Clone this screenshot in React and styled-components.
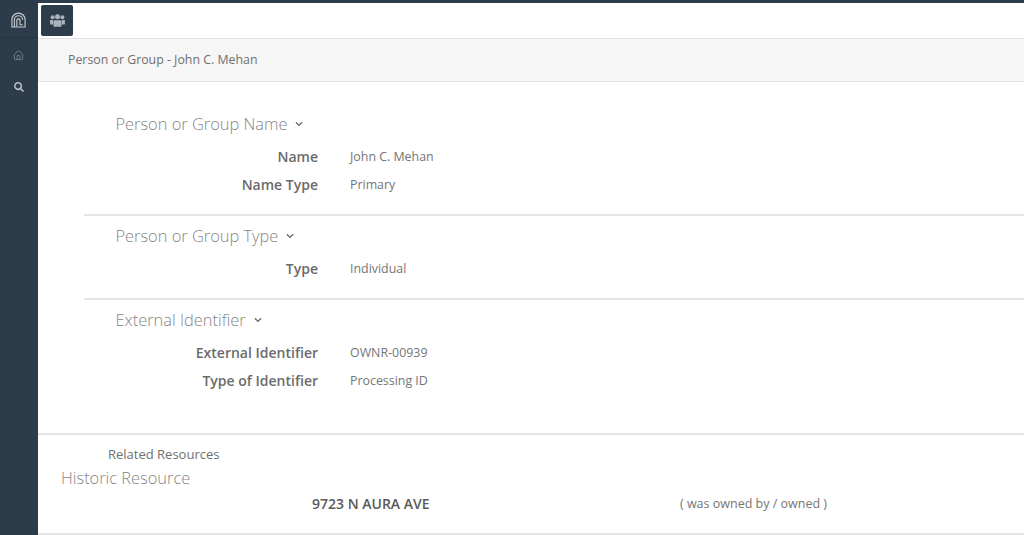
import React from "react";
import styled, { createGlobalStyle } from "styled-components";
import { FaSearch, FaChevronDown } from "react-icons/fa";
import { LuHouse } from "react-icons/lu";

const Global = createGlobalStyle`
  html, body { margin: 0; padding: 0; background: #fff; overflow: hidden; }
  body { font-family: "Open Sans", "Liberation Sans", sans-serif; color: #666; }
`;
const Page = styled.div`width: 1024px; height: 535px; display: flex; flex-direction: column; overflow: hidden;`;
const TopStrip = styled.div`height: 3px; background: #2d3c4b; flex: none;`;
const Body = styled.div`display: flex; flex: 1; min-height: 0;`;
const Side = styled.nav`width: 38px; flex: none; background: #2d3c4b; display: flex; flex-direction: column; align-items: center;`;
const Logo = styled.div`height: 35px; width: 100%; display: flex; align-items: center; justify-content: center; padding: 0 1px 1px 0; border-bottom: 1px solid #28353f; box-sizing: border-box; color: #c8ccd0;`;
const SideIcon = styled.div`height: 32px; width: 100%; display: flex; align-items: center; justify-content: center; padding-right: 1px; box-sizing: border-box; color: ${p => p.$c};`;
const SideList = styled.div`padding-top: 1px; width: 100%;`;
const Main = styled.main`flex: 1; display: flex; flex-direction: column; min-width: 0;`;
const Toolbar = styled.div`height: 35px; box-sizing: border-box; padding: 2px 0 0 3px; display: flex; align-items: flex-start; flex: none;`;
const ToolBtn = styled.div`width: 32px; height: 31px; background: #2d3c4b; border-radius: 2px; display: flex; align-items: center; justify-content: center; color: #aab2ba;`;
const Crumb = styled.div`height: 44px; flex: none; box-sizing: border-box; background: #f6f6f6; border-top: 1px solid #e3e3e3; border-bottom: 1px solid #e3e3e3; padding: 0 0 2px 30px; display: flex; align-items: center; font-size: 12.35px; color: #707070;`;
const Section = styled.section`margin-left: 46px; box-sizing: border-box; height: ${p => p.$h}px; padding: ${p => p.$pt}px 0 0 31.5px; border-bottom: ${p => p.$line ? "2px solid #e4e4e4" : "none"}; flex: none;`;
const Heading = styled.h3`margin: 0; font-weight: 300; font-size: 16.4px; line-height: 22px; color: #858585; display: flex; align-items: center; gap: 8px;`;
const Caret = styled(FaChevronDown)`color: #666;`;
const Rows = styled.div`display: grid; grid-template-columns: 234px 1fr; column-gap: 32px; grid-auto-rows: 28px; margin-left: -31.5px; margin-top: ${p => p.$mt}px;`;
const Label = styled.div`text-align: right; font-weight: 600; font-size: 14px; line-height: 28px; color: #6b6b6b;`;
const Value = styled.div`font-size: 12.4px; line-height: 28px; color: #757575;`;
const Related = styled.section`border-top: 2px solid #e4e4e4; border-bottom: 2px solid #e4e4e4; height: 102px; box-sizing: border-box; flex: none; padding-top: 10px;`;
const RelTitle = styled.div`padding-left: 70px; font-size: 13px; line-height: 18px; color: #707070;`;
const RelHead = styled.h3`margin: 4px 0 0 23px; font-weight: 300; font-size: 16.4px; line-height: 22px; color: #858585;`;
const RelRow = styled.div`display: grid; grid-template-columns: 274px 368px 1fr; margin-top: 5px; align-items: center; line-height: 20px;`;
const RelName = styled.div`grid-column: 2; font-weight: 600; font-size: 14px; color: #5a5a5a;`;
const RelType = styled.div`grid-column: 3; font-size: 12.5px; color: #757575;`;
const Spacer = styled.div`height: ${p => p.$h}px; flex: none;`;

const LogoMark = () => (
  <svg width="15" height="16" viewBox="0 0 16 16" fill="none" stroke="currentColor" strokeWidth="1.2">
    <path d="M1 15.5V7.5a7 6.8 0 0 1 14 0v8z" />
    <path d="M3.6 15.5V7.8a4.4 4.4 0 0 1 8.8 0" />
    <path d="M6.2 15V8.5a1.9 1.9 0 0 1 3.4-1V13h3" />
  </svg>
);

const UsersMark = () => (
  <svg width="15" height="13" viewBox="0 0 15 13" fill="currentColor">
    <circle cx="7.5" cy="2.8" r="2.5" />
    <circle cx="2.6" cy="3.2" r="2" />
    <circle cx="12.4" cy="3.2" r="2" />
    <path d="M4.3 6.2h6.4l.8 1v4.6c0 .6-.5 1-1 1H4.5c-.5 0-1-.4-1-1V7.2z" />
    <path d="M.1 6h3v4.6H1.1c-.5 0-1-.4-1-.9zM14.9 6h-3v4.6h2c.5 0 1-.4 1-.9z" />
  </svg>
);

export default function App() {
  return (
    <Page>
      <Global />
      <TopStrip />
      <Body>
        <Side>
          <Logo><LogoMark /></Logo>
          <SideList>
            <SideIcon $c="#77838f"><LuHouse size={11} /></SideIcon>
            <SideIcon $c="#b9bfc5"><FaSearch size={10} /></SideIcon>
          </SideList>
        </Side>
        <Main>
          <Toolbar><ToolBtn><UsersMark /></ToolBtn></Toolbar>
          <Crumb>Person or Group - John C. Mehan</Crumb>
          <Section $h={134} $pt={31} $line>
            <Heading>Person or Group Name <Caret size={8} /></Heading>
            <Rows $mt={8}>
              <Label>Name</Label><Value>John C. Mehan</Value>
              <Label>Name Type</Label><Value>Primary</Value>
            </Rows>
          </Section>
          <Section $h={84} $pt={9} $line>
            <Heading>Person or Group Type <Caret size={8} /></Heading>
            <Rows $mt={8}>
              <Label>Type</Label><Value>Individual</Value>
            </Rows>
          </Section>
          <Section $h={110} $pt={9}>
            <Heading>External Identifier <Caret size={8} /></Heading>
            <Rows $mt={8}>
              <Label>External Identifier</Label><Value>OWNR-00939</Value>
              <Label>Type of Identifier</Label><Value>Processing ID</Value>
            </Rows>
          </Section>
          <Spacer $h={23} />
          <Related>
            <RelTitle>Related Resources</RelTitle>
            <RelHead>Historic Resource</RelHead>
            <RelRow>
              <RelName>9723 N AURA AVE</RelName>
              <RelType>( was owned by / owned )</RelType>
            </RelRow>
          </Related>
        </Main>
      </Body>
    </Page>
  );
}
